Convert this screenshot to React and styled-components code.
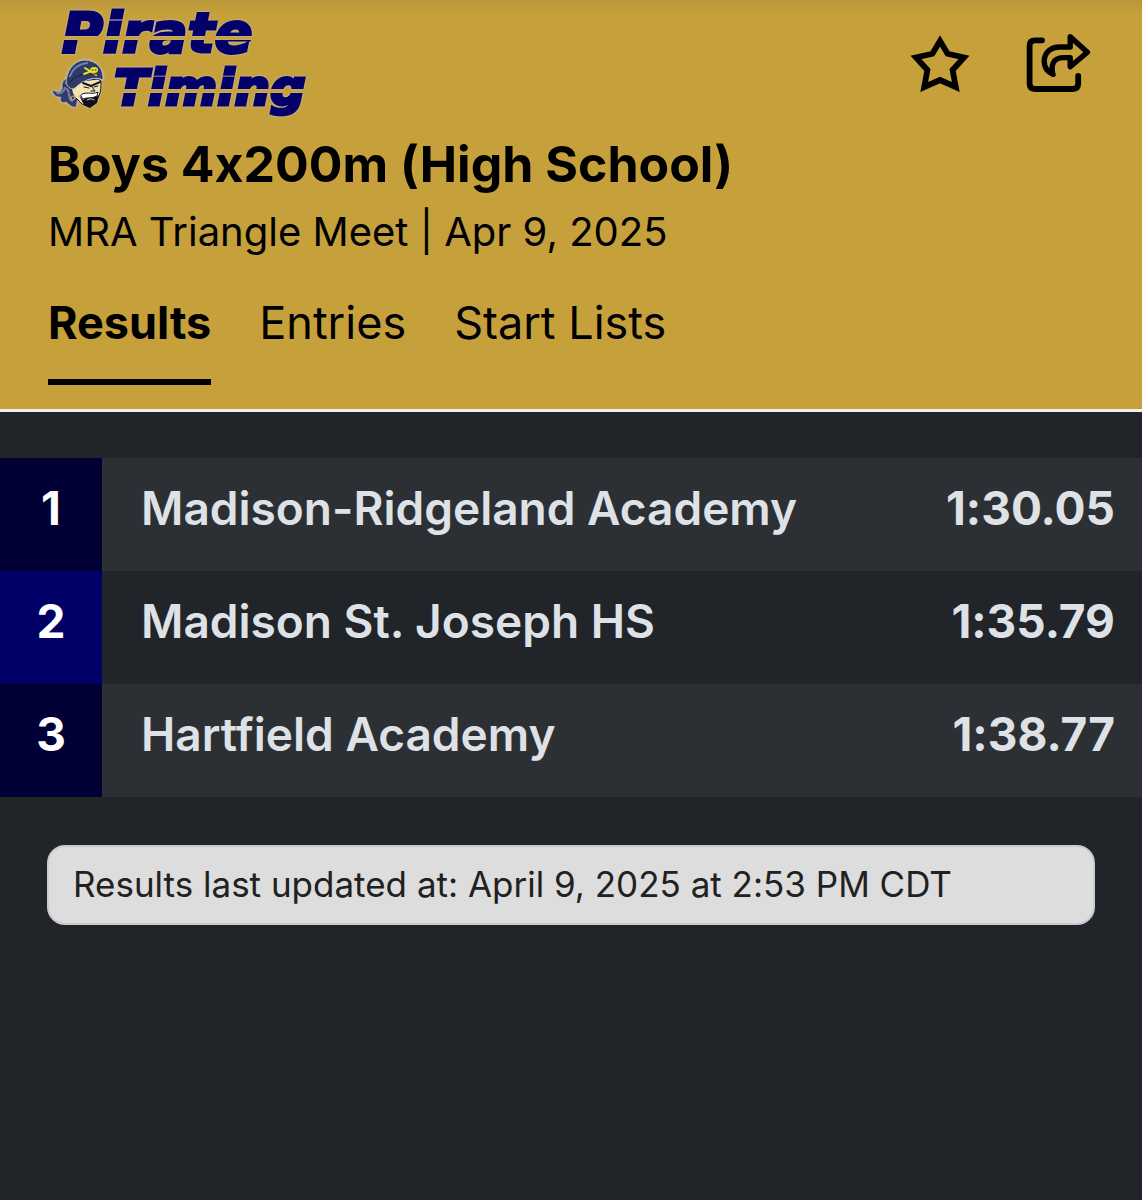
import React, { useState } from "react";
import styled, { createGlobalStyle } from "styled-components";

const results = [
  { place: 1, team: "Madison-Ridgeland Academy", time: "1:30.05" },
  { place: 2, team: "Madison St. Joseph HS", time: "1:35.79" },
  { place: 3, team: "Hartfield Academy", time: "1:38.77" },
];

const tabs = ["Results", "Entries", "Start Lists"];

function App() {
  const [activeTab, setActiveTab] = useState("Results");
  const [favorite, setFavorite] = useState(false);

  return (
    <>
      <GlobalStyle />
      <Header>
        <TopBar>
          <LogoLink href="#home" aria-label="Pirate Timing">
            <Logo />
          </LogoLink>
          <Actions>
            <IconButton
              aria-label="Favorite"
              aria-pressed={favorite}
              onClick={() => setFavorite(!favorite)}
            >
              <StarIcon filled={favorite} />
            </IconButton>
            <IconButton aria-label="Share">
              <ShareIcon />
            </IconButton>
          </Actions>
        </TopBar>
        <Title>Boys 4x200m (High School)</Title>
        <Meet>MRA Triangle Meet | Apr 9, 2025</Meet>
        <Tabs>
          {tabs.map((tab) => (
            <Tab
              key={tab}
              href={`#${tab}`}
              $active={tab === activeTab}
              onClick={() => setActiveTab(tab)}
            >
              {tab}
            </Tab>
          ))}
        </Tabs>
      </Header>
      <main>
        <ResultsTable>
          <tbody>
            {results.map((result) => (
              <Row key={result.place}>
                <Place scope="row">{result.place}</Place>
                <Team>{result.team}</Team>
                <Time>{result.time}</Time>
              </Row>
            ))}
          </tbody>
        </ResultsTable>
        <Updated>Results last updated at: April 9, 2025 at 2:53 PM CDT</Updated>
      </main>
    </>
  );
}

export default App;

function Logo() {
  return (
    <svg width="280" height="122" viewBox="48 0 280 122">
      <defs>
        {/* the gap in each gradient is the speed stripe through the word */}
        <linearGradient id="topWord" gradientUnits="userSpaceOnUse" x1="0" y1="0" x2="0" y2="100">
          <stop offset="0.36" stopColor="#04006a" />
          <stop offset="0.36" stopColor="#04006a" stopOpacity="0" />
          <stop offset="0.4" stopColor="#04006a" stopOpacity="0" />
          <stop offset="0.4" stopColor="#04006a" />
        </linearGradient>
        <linearGradient id="lowWord" gradientUnits="userSpaceOnUse" x1="0" y1="0" x2="0" y2="100">
          <stop offset="0.89" stopColor="#04006a" />
          <stop offset="0.89" stopColor="#04006a" stopOpacity="0" />
          <stop offset="0.93" stopColor="#04006a" stopOpacity="0" />
          <stop offset="0.93" stopColor="#04006a" />
        </linearGradient>
      </defs>
      <Word x="62" y="52" fontSize="56" fill="url(#topWord)" stroke="url(#topWord)">
        Pirate
      </Word>
      <Word x="114" y="105" fontSize="50" fill="url(#lowWord)" stroke="url(#lowWord)">
        Timing
      </Word>
      <PirateHead />
    </svg>
  );
}

function PirateHead() {
  return (
    <g strokeLinejoin="round" strokeLinecap="round">
      <path
        d="M70 78C64 78 62 82 62 86C63 91 59 93 55 91L52 90C53 95 57 98 61 97C59 101 62 104 66 102C70 105 72 108 76 107L78 98L75 84Z"
        fill="#323b68"
        stroke="#a8a6b0"
      />
      <path d="M73 82L98 79L101 81C101 87 101 91 99 96L95 103L89 107L82 104L75 97C71 93 71 88 73 82Z" fill="#f2e3b0" stroke="#14172e" />
      <path d="M66 83C66 72 73 61 84 60C96 60 104 68 103 80C96 76 84 79 75 88C72 90 68 88 66 83Z" fill="#303a68" stroke="#b9b9c4" />
      <path d="M70 76C73 68 79 64 87 63" fill="none" stroke="#7883a8" strokeWidth="2" />
      <path d="M69 83C74 76 84 73 94 73" fill="none" stroke="#151b43" />
      <path d="M67 89C71 93 67 98 72 101M57 93C60 94 64 92 65 88" fill="none" stroke="#7883a8" strokeWidth="2" />
      <path d="M85 68L96 75M84 74L97 69" stroke="#e7e12a" strokeWidth="2" />
      <ellipse cx="94" cy="70" rx="4" ry="3" fill="#e7e12a" />
      <path d="M92 70h1M95 70h1M92 74h4" stroke="#22284b" strokeWidth="1" />
      <path d="M83 83L91 86L100 82" fill="none" stroke="#161629" strokeWidth="2" />
      <path d="M84 87L89 88M94 87L98 86M92 87L95 91L91 91" fill="none" stroke="#161629" />
      <path d="M81 95C84 91 92 95 98 92L97 96C92 99 87 97 83 99Z" fill="#fff" stroke="#161629" />
      <path d="M79 95L83 100C88 96 94 99 99 95L97 103L90 108L84 105Z" fill="#10101d" />
      <path d="M87 100C90 98 93 99 94 100" fill="none" stroke="#f2e3b0" />
      <circle cx="73" cy="98" r="2" fill="none" stroke="#d6c56d" />
    </g>
  );
}

function StarIcon({ filled }) {
  return (
    <svg width="64" height="64" viewBox="908 32 64 64">
      <path
        d="M940 41L947.6 53.8L964 57.4L952.6 70L955.8 87L940 80L924.2 87L927.4 70L916 57.4L932.4 53.8Z"
        fill={filled ? "#000" : "none"}
        stroke="#000"
        strokeWidth="5.8"
      />
    </svg>
  );
}

function ShareIcon() {
  return (
    <svg width="68" height="64" viewBox="1024 32 68 64">
      <g fill="none" stroke="#000" strokeLinecap="round" strokeLinejoin="round">
        <path
          d="M1042 40.3H1035Q1029.6 40.3 1029.6 45.7V83.6Q1029.6 89 1035 89H1072.8Q1078.2 89 1078.2 83.6V76"
          strokeWidth="5.8"
        />
        <path
          d="M1070.2 47V36.8L1087.4 52.2L1070.2 66.8V57.6H1063C1053 57.6 1050.5 66 1053 74.4C1047 71.5 1044.2 67 1044.2 61.5C1044.2 52 1051 47 1060 47Z"
          strokeWidth="5.4"
        />
      </g>
    </svg>
  );
}

const GlobalStyle = createGlobalStyle`
  * {
    box-sizing: border-box;
  }

  body {
    margin: 0;
    min-height: 100vh;
    background: #212429;
    font-family: Inter, "Liberation Sans", sans-serif;
    font-variant-ligatures: no-contextual;
  }
`;

const Header = styled.header`
  padding: 0 50px 24px 48px;
  background: linear-gradient(#b8963a, #c5a03b 12px);
  border-bottom: 3px solid #f0eff2;
  color: #000;
`;

const TopBar = styled.div`
  display: flex;
  justify-content: space-between;
  align-items: flex-start;
`;

const LogoLink = styled.a`
  svg {
    display: block;
    filter: drop-shadow(0 0 1px #d0c4c8);
  }
`;

const Word = styled.text`
  font-family: "DejaVu Sans", sans-serif;
  font-weight: 700;
  font-style: italic;
  stroke-width: 3px;
`;

const Actions = styled.div`
  display: flex;
  gap: 52px;
  padding-top: 32px;
`;

const IconButton = styled.button`
  padding: 0;
  border: 0;
  background: none;
  cursor: pointer;

  svg {
    display: block;
  }
`;

const Title = styled.h1`
  margin: 12px 0 0;
  font-size: 50px;
  font-weight: 700;
  line-height: 60px;
`;

const Meet = styled.p`
  margin: 12px 0 0;
  font-size: 40px;
  line-height: 52px;
`;

const Tabs = styled.nav`
  display: flex;
  gap: 48px;
  margin-top: 36px;
`;

const Tab = styled.a`
  padding-bottom: 27px;
  border-bottom: 6px solid ${(props) => (props.$active ? "#000" : "transparent")};
  color: #000;
  font-size: 45px;
  font-weight: ${(props) => (props.$active ? 700 : 400)};
  line-height: 58px;
  text-decoration: none;
`;

const ResultsTable = styled.table`
  width: 100%;
  margin-top: 46px;
  border-collapse: collapse;
  color: #dee2e6;
  font-size: 46px;
  font-weight: 600;
  line-height: 58px;
`;

const Row = styled.tr`
  height: 113px;
  background: #212429;

  &:nth-child(odd) {
    background: #2c3034;
  }
`;

const Place = styled.th`
  width: 102px;
  padding: 0 0 14px;
  background: #000066;
  color: #fff;
  font-weight: 700;

  ${Row}:nth-child(odd) & {
    background: #000035;
  }
`;

const Team = styled.td`
  padding: 0 0 14px 39px;
`;

const Time = styled.td`
  padding: 0 27px 14px 0;
  font-weight: 700;
  text-align: right;
`;

const Updated = styled.p`
  margin: 48px 47px;
  padding: 15px 24px 17px;
  border: 2px solid #c9c9cf;
  border-radius: 18px;
  background: #dddddd;
  color: #212121;
  font-size: 35px;
  line-height: 44px;
`;
